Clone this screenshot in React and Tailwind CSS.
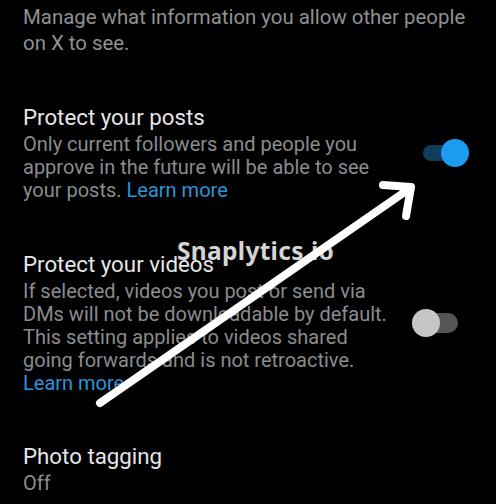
import React from "react";

function Toggle({ on }) {
  return (
    <div className="relative w-[57px] h-[28px] shrink-0">
      {on ? (
        <>
          <div className="absolute left-[11px] right-[6px] top-[6px] h-[16px] rounded-full bg-[#0e3d5c]" />
          <div className="absolute right-0 top-0 w-[28px] h-[28px] rounded-full bg-[#1d9bf0]" />
        </>
      ) : (
        <>
          <div className="absolute left-[8px] right-[11px] top-[4px] h-[20px] rounded-full bg-[#555555]" />
          <div className="absolute left-0 top-0 w-[28px] h-[28px] rounded-full bg-[#c6c6c6]" />
        </>
      )}
    </div>
  );
}

export default function App() {
  const font = { fontFamily: "Roboto, 'Noto Sans', sans-serif" };
  return (
    <div
      className="relative w-[496px] h-[504px] overflow-hidden bg-black"
      style={font}
    >
      <div className="pl-[23px] pr-[27px] pt-[4px] flex flex-col">
        <p className="text-[20.4px] leading-[26px] text-[#8f9194] w-[452px]">
          Manage what information you allow other people on X to see.
        </p>

        <div className="mt-[47px] flex items-center justify-between">
          <div className="w-[366px]">
            <div className="text-[22.3px] leading-[28px] text-[#e4e6e8]">
              Protect your posts
            </div>
            <p className="mt-[2px] text-[20px] leading-[23px] text-[#8a8c8f]">
              Only current followers and people you approve in the future will be able to see your posts.{" "}
              <span className="text-[#2a94dc]">Learn more</span>
            </p>
          </div>
          <Toggle on />
        </div>

        <div className="mt-[48px] flex items-center justify-between">
          <div className="w-[366px]">
            <div className="text-[22.3px] leading-[28px] text-[#e4e6e8]">
              Protect your videos
            </div>
            <p className="mt-[2px] text-[20px] leading-[23px] text-[#8a8c8f]">
              If selected, videos you post or send via DMs will not be downloadable by default. This setting applies to videos shared going forwards and is not retroactive.
              <br />
              <span className="text-[#2a94dc]">Learn more</span>
            </p>
          </div>
          <Toggle on={false} />
        </div>

        <div className="mt-[47px]">
          <div className="text-[22.3px] leading-[28px] text-[#e4e6e8]">
            Photo tagging
          </div>
          <p className="mt-[2px] text-[20px] leading-[23px] text-[#8a8c8f]">Off</p>
        </div>
      </div>

      <div
        className="absolute left-[177px] top-[235px] text-[24.5px] font-bold leading-[32px] tracking-[0.3px] text-[#d4d4d4]"
        style={{ fontFamily: "'Noto Sans', 'DejaVu Sans', sans-serif" }}
      >
        Snaplytics.io
      </div>

      <svg
        className="absolute left-0 top-0 pointer-events-none"
        width="496"
        height="504"
        viewBox="0 0 496 504"
      >
        <g stroke="#ffffff" strokeWidth="8" strokeLinecap="round" strokeLinejoin="round" fill="none">
          <line x1="100" y1="403" x2="409" y2="189" />
          <polyline points="383,185 411,187 406,216" />
        </g>
      </svg>
    </div>
  );
}
